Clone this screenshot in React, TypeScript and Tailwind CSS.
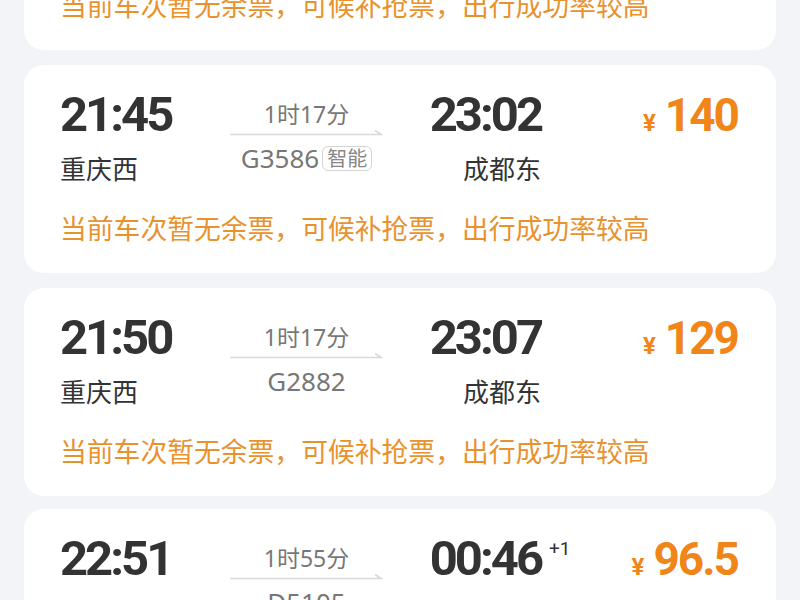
import React from "react";

type Train = {
  dep: string;
  arr: string;
  from: string;
  to: string;
  dur: string;
  no: string;
  smart?: boolean;
  plus?: string;
  price: string;
};

const trains: Train[] = [
  { dep: "21:20", arr: "22:37", from: "重庆西", to: "成都东", dur: "1时17分", no: "G8612", price: "154" },
  { dep: "21:45", arr: "23:02", from: "重庆西", to: "成都东", dur: "1时17分", no: "G3586", smart: true, price: "140" },
  { dep: "21:50", arr: "23:07", from: "重庆西", to: "成都东", dur: "1时17分", no: "G2882", price: "129" },
  { dep: "22:51", arr: "00:46", from: "重庆西", to: "成都东", dur: "1时55分", no: "D5105", plus: "+1", price: "96.5" },
];

const num = { fontFamily: "Roboto, 'Liberation Sans', sans-serif" };
const cjk = { fontFamily: "'Noto Sans', 'Noto Sans CJK SC', sans-serif" };

function Arrow() {
  return (
    <svg width="153" height="8" viewBox="0 0 153 8" className="block">
      <path d="M0 6.5 H151 L145 2.5" fill="none" stroke="#d9d9dc" strokeWidth="1.6" />
    </svg>
  );
}

function Card({ t, last }: { t: Train; last?: boolean }) {
  return (
    <div className={`bg-white rounded-[20px] pl-[36px] pr-[38px] pt-[25px] pb-[29px] ${last ? "mt-[-2px]" : ""}`}>
      <div className="flex">
        <div className="w-[170px] flex flex-col">
          <div className="text-[49px] leading-[50px] font-bold text-[#333333] tracking-[-3px]" style={num}>
            {t.dep}
          </div>
          <div className="mt-[14px] text-[26px] leading-[30px] text-[#333333]" style={cjk}>
            {t.from}
          </div>
        </div>
        <div className="w-[153px] flex flex-col items-center pt-[11px]">
          <div className="text-[23px] leading-[26px] text-[#777777]" style={cjk}>
            {t.dur}
          </div>
          <div className="mt-[1px]">
            <Arrow />
          </div>
          <div className="mt-[7px] flex items-center gap-[3px]">
            <span className="text-[26px] leading-[30px] text-[#777777]" style={cjk}>
              {t.no}
            </span>
            {t.smart && (
              <span
                className="text-[20px] leading-[23px] px-[4px] text-[#888888] border border-[#d4d4d4] rounded-[6px]"
                style={cjk}
              >
                智能
              </span>
            )}
          </div>
        </div>
        <div className="w-[158px] flex flex-col items-end">
          <div className="relative text-[49px] leading-[50px] font-bold text-[#333333] tracking-[-3px]" style={num}>
            {t.arr}
            {t.plus && (
              <span className="absolute left-[100%] top-[5px] ml-[8px] text-[19px] leading-[20px] font-normal tracking-normal text-[#333333]">
                {t.plus}
              </span>
            )}
          </div>
          <div className="mt-[14px] text-[26px] leading-[30px] text-[#333333]" style={cjk}>
            {t.to}
          </div>
        </div>
        <div className="flex-1 flex justify-end items-start">
          <div className="flex items-baseline text-[#f08519]" style={num}>
            <span className="text-[24px] font-bold mr-[9px]">¥</span>
            <span className="text-[46px] leading-[50px] font-bold tracking-[-2px]">{t.price}</span>
          </div>
        </div>
      </div>
      <div className="mt-[30px] text-[26.8px] leading-[30px] text-[#e8922e] whitespace-nowrap" style={cjk}>
        当前车次暂无余票，可候补抢票，出行成功率较高
      </div>
    </div>
  );
}

export default function App() {
  return (
    <div className="w-[800px] h-[600px] overflow-hidden bg-[#f3f4f8]">
      <div className="px-[24px] mt-[-158px] flex flex-col gap-[15px]">
        {trains.map((t, i) => (
          <Card key={t.no} t={t} last={i === trains.length - 1} />
        ))}
      </div>
    </div>
  );
}
